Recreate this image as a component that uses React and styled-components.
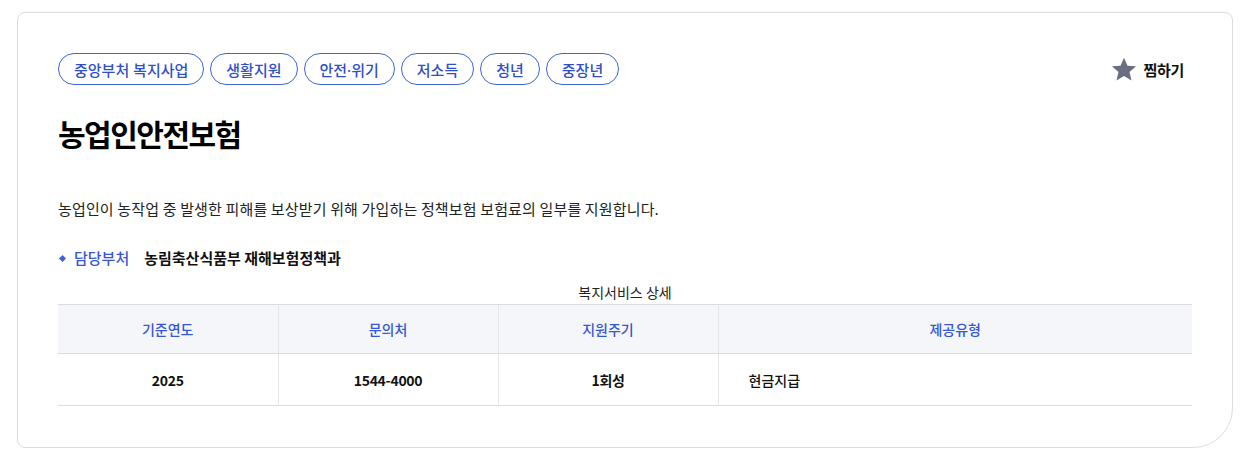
import React from "react";
import styled, { createGlobalStyle } from "styled-components";

const Global = createGlobalStyle`
  html, body { margin: 0; padding: 0; background: #fff; }
  body { font-family: "Noto Sans CJK KR", "Noto Sans", sans-serif; color: #222; }
  * { box-sizing: border-box; }
`;

const Page = styled.div`
  padding: 12px 15px 16px 17px;
`;

const Card = styled.section`
  border: 1px solid #dcdcdc;
  border-radius: 8px 8px 40px 8px;
  padding: 40px 40px 41px 40px;
  background: #fff;
`;

const TopRow = styled.div`
  display: flex;
  align-items: center;
  justify-content: space-between;
`;

const Tags = styled.div`
  display: flex;
  gap: 6px;
`;

const Tag = styled.span`
  display: inline-flex;
  align-items: center;
  height: 32px;
  padding: 0 15px;
  border: 1px solid #3e63dd;
  border-radius: 16px;
  color: #2f4fc9;
  font-family: "Noto Sans", "Noto Sans CJK KR", sans-serif;
  font-size: 15px;
  font-weight: 500;
`;

const Fav = styled.button`
  display: flex;
  align-items: center;
  gap: 5px;
  border: 0;
  background: none;
  padding: 0 8px 0 0;
  font-family: inherit;
  font-size: 15px;
  font-weight: 700;
  color: #111;
  letter-spacing: -0.3px;
  cursor: pointer;
`;

const Title = styled.h2`
  margin: 28px 0 0;
  font-size: 30px;
  font-weight: 700;
  line-height: 40px;
  color: #000;
  letter-spacing: -1.5px;
`;

const Desc = styled.p`
  margin: 44px 0 0;
  font-size: 15px;
  line-height: 24px;
  color: #222;
  letter-spacing: 0.15px;
`;

const Dept = styled.div`
  display: flex;
  align-items: center;
  margin-top: 25px;
  font-size: 15px;
  line-height: 24px;
`;

const Bullet = styled.span`
  width: 5px;
  height: 5px;
  background: #3e63dd;
  transform: rotate(45deg);
  margin: 0 9px 0 2px;
`;

const DeptLabel = styled.span`
  color: #3556d6;
  font-weight: 500;
  margin-right: 15px;
`;

const DeptValue = styled.span`
  color: #111;
  font-weight: 700;
`;

const Table = styled.table`
  width: 100%;
  margin-top: 12px;
  border-collapse: collapse;
  table-layout: fixed;
`;

const Caption = styled.caption`
  font-size: 14px;
  line-height: 20px;
  color: #222;
  padding-bottom: 2px;
`;

const Th = styled.th`
  height: 49px;
  background: #f5f6fa;
  border-top: 1px solid #dcdcdc;
  border-bottom: 1px solid #dcdcdc;
  border-left: 1px solid #e6e6e6;
  color: #3556d6;
  font-size: 14px;
  font-weight: 500;
  &:first-child { border-left: 0; }
`;

const Td = styled.td`
  height: 52px;
  border-bottom: 1px solid #dcdcdc;
  border-left: 1px solid #e6e6e6;
  text-align: ${(p) => (p.$left ? "left" : "center")};
  padding: ${(p) => (p.$left ? "0 30px" : "0")};
  font-size: 14px;
  font-weight: ${(p) => (p.$left ? 500 : 700)};
  color: #111;
  letter-spacing: ${(p) => (p.$left ? "0" : "-0.3px")};
  &:first-child { border-left: 0; }
`;

const tags = ["중앙부처 복지사업", "생활지원", "안전·위기", "저소득", "청년", "중장년"];

export default function App() {
  return (
    <Page>
      <Global />
      <Card>
        <TopRow>
          <Tags>
            {tags.map((t) => (
              <Tag key={t}>{t}</Tag>
            ))}
          </Tags>
          <Fav>
            <svg width="28" height="27" viewBox="0 0 24 24">
              <path
                d="M12 1.5l3.1 7.1 7.6.6-5.8 5 1.8 7.5L12 17.7l-6.7 4 1.8-7.5-5.8-5 7.6-.6z"
                fill="#6b6d82"
              />
            </svg>
            찜하기
          </Fav>
        </TopRow>
        <Title>농업인안전보험</Title>
        <Desc>
          농업인이 농작업 중 발생한 피해를 보상받기 위해 가입하는 정책보험 보험료의 일부를 지원합니다.
        </Desc>
        <Dept>
          <Bullet />
          <DeptLabel>담당부처</DeptLabel>
          <DeptValue>농림축산식품부 재해보험정책과</DeptValue>
        </Dept>
        <Table>
          <Caption>복지서비스 상세</Caption>
          <colgroup>
            <col style={{ width: "220px" }} />
            <col style={{ width: "220px" }} />
            <col style={{ width: "220px" }} />
            <col />
          </colgroup>
          <thead>
            <tr>
              <Th>기준연도</Th>
              <Th>문의처</Th>
              <Th>지원주기</Th>
              <Th>제공유형</Th>
            </tr>
          </thead>
          <tbody>
            <tr>
              <Td>2025</Td>
              <Td>1544-4000</Td>
              <Td>1회성</Td>
              <Td $left>현금지급</Td>
            </tr>
          </tbody>
        </Table>
      </Card>
    </Page>
  );
}
